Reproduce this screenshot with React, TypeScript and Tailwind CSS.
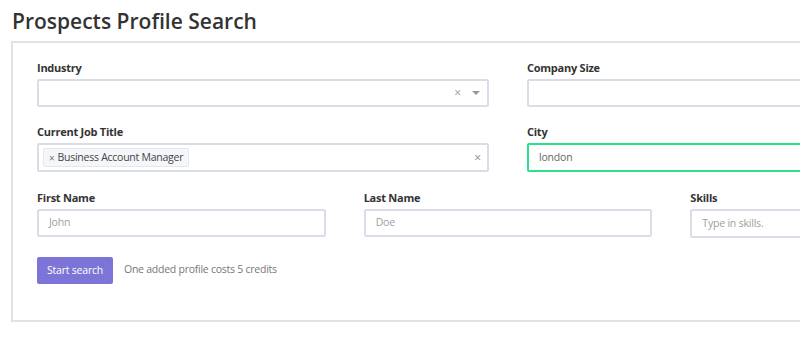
import React from "react";

const font = { fontFamily: '"Open Sans", "Noto Sans", sans-serif' };

function Label({ children }: { children: React.ReactNode }) {
  return (
    <div className="h-[14px] mb-[4px] text-[11px] leading-[14px] font-bold text-[#333] tracking-[-0.25px]">{children}</div>
  );
}

export default function App() {
  return (
    <div className="w-[800px] h-[339px] overflow-hidden bg-white" style={font}>
      <div className="w-[1020px]">
        <h1 className="pl-[12px] pt-[6px] h-[41px] text-[21px] leading-[30px] font-semibold text-[#333]">
          Prospects Profile Search
        </h1>
        <div className="ml-[11px] w-[994px] h-[281px] border-2 border-[#e2e2e2] pt-[18px] px-[24px]">
          <div className="grid grid-cols-2 gap-x-[38px]">
            <div>
              <Label>Industry</Label>
              <div className="h-[28px] border-2 border-[#dcdbe8] rounded-[2px] flex items-center justify-end pr-[7px] gap-[11px] text-[#999]">
                <span className="text-[12px] leading-none">×</span>
                <svg width="8" height="5" viewBox="0 0 8 5"><path d="M0 0h8L4 4z" fill="#999" /></svg>
              </div>
            </div>
            <div>
              <Label>Company Size</Label>
              <div className="h-[28px] border-2 border-[#dcdbe8] rounded-[2px]" />
            </div>
          </div>
          <div className="grid grid-cols-2 gap-x-[38px] mt-[18px]">
            <div>
              <Label>Current Job Title</Label>
              <div className="h-[29px] border-2 border-[#dcdbe8] rounded-[2px] flex items-center pl-[4px] pr-[6px]">
                <div className="h-[19px] flex items-center px-[5px] bg-[#f4f6fa] border border-[#e2e6ee] rounded-[2px] text-[10.5px] tracking-[-0.25px] text-[#444] gap-[3px]">
                  <span className="text-[10px] text-[#777] mt-[2px]">×</span>
                  <span>Business Account Manager</span>
                </div>
                <span className="ml-auto text-[12px] text-[#888] leading-none">×</span>
              </div>
            </div>
            <div>
              <Label>City</Label>
              <div className="h-[29px] border-2 border-[#2ee08e] rounded-[2px] flex items-center pl-[10px] text-[10.5px] tracking-[-0.2px] text-[#666]">
                london
              </div>
            </div>
          </div>
          <div className="grid grid-cols-3 gap-x-[38px] mt-[19px]">
            <div>
              <Label>First Name</Label>
              <div className="h-[28px] border-2 border-[#dcdbe8] rounded-[2px] flex items-center pl-[10px] text-[10.5px] tracking-[-0.2px] text-[#a0a0a0]">John</div>
            </div>
            <div>
              <Label>Last Name</Label>
              <div className="h-[28px] border-2 border-[#dcdbe8] rounded-[2px] flex items-center pl-[10px] text-[10.5px] tracking-[-0.2px] text-[#a0a0a0]">Doe</div>
            </div>
            <div>
              <Label>Skills</Label>
              <div className="h-[29px] border-2 border-[#dcdbe8] rounded-[2px] flex items-center pl-[10px] text-[10.5px] tracking-[-0.2px] text-[#a0a0a0]">Type in skills.</div>
            </div>
          </div>
          <div className="flex items-center mt-[19px] gap-[11px]">
            <button className="h-[27px] w-[76px] bg-[#7c74d6] rounded-[2px] text-white text-[10.5px] tracking-[-0.2px]">Start search</button>
            <span className="text-[10.5px] tracking-[-0.25px] text-[#777] -mt-[2px]">One added profile costs 5 credits</span>
          </div>
        </div>
      </div>
    </div>
  );
}
